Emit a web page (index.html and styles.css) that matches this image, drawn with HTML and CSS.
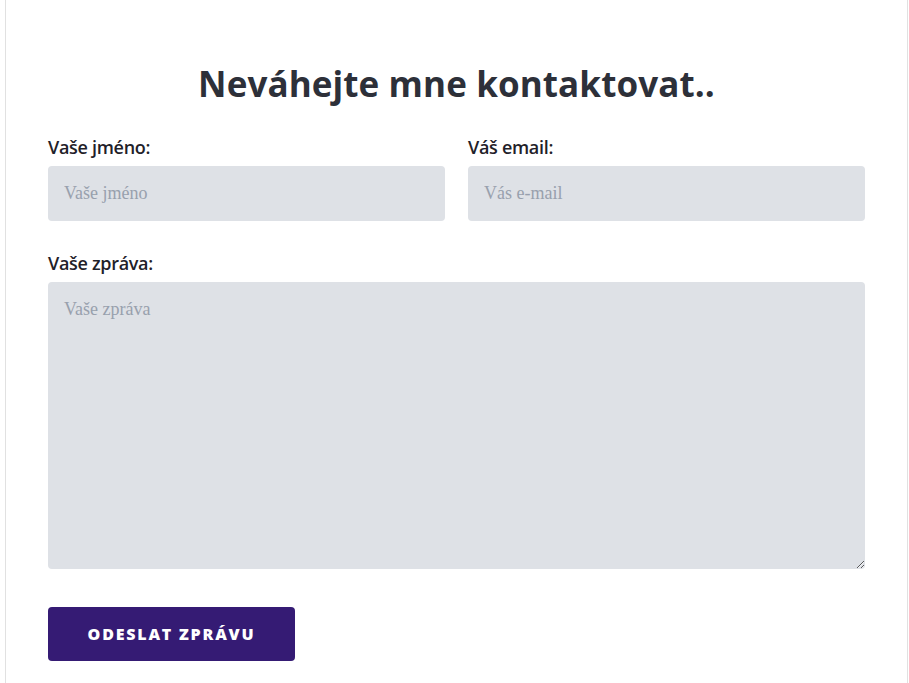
FILE: index.html
```html
<!DOCTYPE html>
<html lang="cs">
<head>
    <meta charset="UTF-8">
    <meta name="viewport" content="width=device-width, initial-scale=1.0">
    <title>Kontakt</title>
    <link rel="stylesheet" href="styles.css">
</head>
<body>
    <section class="contact">
        <h1>Neváhejte mne kontaktovat..</h1>
        <form class="contact-form">
            <div class="row">
                <div class="field">
                    <label for="name">Vaše jméno:</label>
                    <input type="text" id="name" placeholder="Vaše jméno">
                </div>
                <div class="field">
                    <label for="email">Váš email:</label>
                    <input type="email" id="email" placeholder="Vás e-mail">
                </div>
            </div>
            <div class="field">
                <label for="message">Vaše zpráva:</label>
                <textarea id="message" placeholder="Vaše zpráva"></textarea>
            </div>
            <button type="submit" class="send-btn">Odeslat zprávu</button>
        </form>
    </section>
</body>
</html>
```

FILE: styles.css
```css
* {
    margin: 0;
    padding: 0;
    box-sizing: border-box;
}

body {
    background: #fff;
    padding: 0 1px 0 5px;
    font-family: 'Open Sans', sans-serif;
    color: #2d3039;
}

.contact {
    min-height: 683px;
    border-left: 1px solid #e1e1e1;
    border-right: 1px solid #e1e1e1;
    padding: 60px 42px 20px;
}

.contact h1 {
    text-align: center;
    font-family: 'Open Sans', sans-serif;
    font-weight: 700;
    font-size: 35px;
    letter-spacing: 0.1px;
    color: #2d3039;
    margin-bottom: 28px;
}

.row {
    display: grid;
    grid-template-columns: 1fr 1fr;
    gap: 23px;
}

.field {
    display: flex;
    flex-direction: column;
    margin-bottom: 30px;
}

.field label {
    font-size: 18px;
    font-weight: 600;
    color: #1f2129;
    margin-bottom: 7px;
    letter-spacing: -0.3px;
}

.field input,
.field textarea {
    border: none;
    outline: none;
    background: #dee1e6;
    border-radius: 4px;
    font-family: 'Liberation Serif', serif;
    font-size: 18px;
    color: #333;
    padding: 0 16px;
}

.field input {
    height: 55px;
}

.field textarea {
    height: 287px;
    padding: 17px 16px;
    resize: vertical;
}

.field input::placeholder,
.field textarea::placeholder {
    color: #98a0ad;
}

.send-btn {
    border: none;
    background: #351b74;
    color: #fff;
    width: 247px;
    height: 54px;
    border-radius: 4px;
    font-family: 'Open Sans', sans-serif;
    font-weight: 800;
    font-size: 16px;
    letter-spacing: 1.8px;
    text-transform: uppercase;
    cursor: pointer;
    margin-top: 8px;
}
```
